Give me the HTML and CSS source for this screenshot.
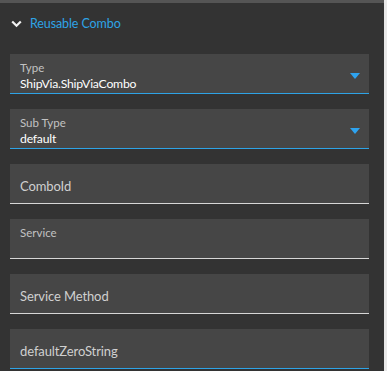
FILE: index.html
```html
<!DOCTYPE html>
<html>
<head>
<meta charset="utf-8">
<link rel="stylesheet" href="styles.css">
</head>
<body>
<div class="page">
  <div class="panel">
    <div class="header">
      <svg class="chev" width="11" height="8" viewBox="0 0 11 8"><path d="M1.2 1.5 L5.5 5.8 L9.8 1.5" fill="none" stroke="#f2f2f2" stroke-width="2.2"/></svg>
      <span class="title">Reusable Combo</span>
    </div>
    <div class="fields">
      <div class="field active">
        <div class="label">Type</div>
        <div class="value">ShipVia.ShipViaCombo</div>
        <span class="arrow"></span>
      </div>
      <div class="field active">
        <div class="label">Sub Type</div>
        <div class="value">default</div>
        <span class="arrow"></span>
      </div>
      <div class="field empty">
        <div class="placeholder">ComboId</div>
      </div>
      <div class="field">
        <div class="label">Service</div>
        <div class="value"></div>
      </div>
      <div class="field empty">
        <div class="placeholder">Service Method</div>
      </div>
      <div class="field empty active">
        <div class="placeholder">defaultZeroString</div>
      </div>
    </div>
  </div>
  <div class="scroll"></div>
</div>
</body>
</html>
```
FILE: styles.css
```css
html, body { margin: 0; padding: 0; background: #333333; }
.page { display: flex; width: 387px; height: 371px; overflow: hidden; font-family: Lato, "Noto Sans", sans-serif; }
.panel { width: 384px; border-top: 3px solid #555555; background: #333333; box-sizing: border-box; }
.scroll { width: 3px; background: #e9e9e9; }
.header { display: flex; align-items: center; height: 41px; padding-left: 11px; box-sizing: border-box; }
.chev { margin-right: 8px; }
.title { color: #2ea3e6; font-size: 12.5px; letter-spacing: -0.1px; }
.fields { display: flex; flex-direction: column; gap: 15px; padding: 10px 15px 0 10px; }
.field { position: relative; height: 40px; background: #464646; border-bottom: 1px solid #d6d6d6; box-sizing: border-box; padding: 7px 10px 0 10px; }
.field.active { border-bottom-color: #2ea3e6; }
.label { color: #c2c2c2; font-size: 11.5px; line-height: 13px; }
.value { color: #ffffff; font-size: 12.2px; line-height: 16px; letter-spacing: -0.2px; margin-top: 2px; }
.field.empty { display: flex; align-items: center; padding-top: 4px; }
.placeholder { color: #d0d0d0; font-size: 13px; letter-spacing: -0.1px; }
.arrow { position: absolute; right: 9px; top: 19px; width: 0; height: 0; border-left: 5.5px solid transparent; border-right: 5.5px solid transparent; border-top: 6px solid #2ea3ef; }
```
